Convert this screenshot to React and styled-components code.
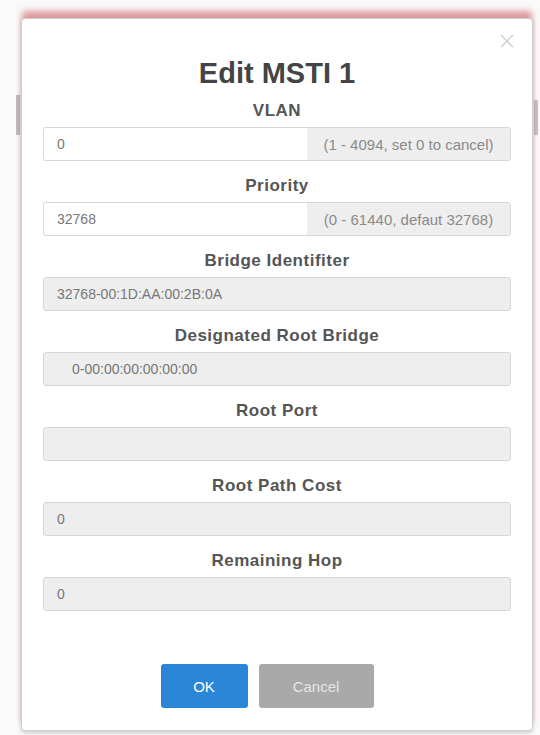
import React from "react";
import styled, { createGlobalStyle } from "styled-components";

const Global = createGlobalStyle`
  html, body {
    margin: 0;
    padding: 0;
    background: #fafafa;
    font-family: "Liberation Sans", Arial, sans-serif;
  }
`;

const Page = styled.div`
  position: relative;
  width: 540px;
  height: 735px;
  overflow: hidden;
  padding-top: 18px;
  box-sizing: border-box;
`;

// bits of the page behind the dialog that peek out at the sides
const Peek = styled.div`
  position: absolute;
  top: ${props => props.top}px;
  left: ${props => props.left}px;
  width: 4px;
  height: ${props => props.h}px;
  background: ${props => props.colour || "#cfcfcf"};
`;

const Modal = styled.div`
  position: relative;
  margin-left: 21px;
  width: 512px;
  height: 713px;
  box-sizing: border-box;
  background: #fff;
  border: 1px solid #cfcfcf;
  border-radius: 4px;
  box-shadow: 0 -8px 6px -1px rgba(210, 112, 120, 0.7),
    0 2px 4px rgba(0, 0, 0, 0.18);
  padding: 37px 21px 0 21px;
  display: flex;
  flex-direction: column;
`;

const Close = styled.button`
  position: absolute;
  top: 14px;
  right: 17px;
  width: 16px;
  height: 16px;
  padding: 0;
  border: none;
  background: none;
  color: #cfcfcf;
  display: flex;
  align-items: center;
  justify-content: center;
`;

const Title = styled.h2`
  margin: 0 0 11px;
  text-align: center;
  font-size: 29px;
  line-height: 34px;
  font-weight: bold;
  color: #444;
`;

const Group = styled.div`
  display: flex;
  flex-direction: column;
  gap: 6px;
  margin-bottom: 15px;
`;

const Label = styled.label`
  text-align: center;
  font-size: 17px;
  line-height: 20px;
  letter-spacing: 0.5px;
  font-weight: bold;
  color: #555;
`;

const InputRow = styled.div`
  display: flex;
  height: 34px;
  border: 1px solid #d6d6d6;
  border-radius: 3px;
  box-sizing: border-box;
  overflow: hidden;
  background: ${props => (props.readOnly ? "#eeeeee" : "#fff")};
`;

const Field = styled.div`
  flex: 1;
  display: flex;
  align-items: center;
  padding-left: ${props => props.indent || 13}px;
  font-size: 14px;
  color: #777;
`;

const Addon = styled.div`
  width: 203px;
  display: flex;
  align-items: center;
  justify-content: center;
  background: #eeeeee;
  font-size: 15px;
  color: #8a8a8a;
  white-space: nowrap;
`;

const Footer = styled.div`
  display: flex;
  justify-content: center;
  gap: 11px;
  margin-top: 38px;
  padding-right: 20px;
`;

const Button = styled.button`
  height: 44px;
  width: ${props => props.w}px;
  border: none;
  border-radius: 3px;
  font-family: "Liberation Sans", Arial, sans-serif;
  font-size: 15px;
  background: ${props => (props.primary ? "#2c86d8" : "#a9a9a9")};
  color: ${props => (props.primary ? "#fff" : "#e6e6e6")};
`;

const fields = [
  { label: "VLAN", value: "0", hint: "(1 - 4094, set 0 to cancel)" },
  { label: "Priority", value: "32768", hint: "(0 - 61440, defaut 32768)" },
  { label: "Bridge Identifiter", value: "32768-00:1D:AA:00:2B:0A", readOnly: true },
  { label: "Designated Root Bridge", value: "0-00:00:00:00:00:00", readOnly: true, indent: 28 },
  { label: "Root Port", value: "", readOnly: true },
  { label: "Root Path Cost", value: "0", readOnly: true },
  { label: "Remaining Hop", value: "0", readOnly: true },
];

function App() {
  return (
    <Page>
      <Global />
      <Peek top={95} left={16} h={40} colour="#bdbdbd" />
      <Peek top={100} left={534} h={35} colour="#c4c4c4" />
      <Modal>
        <Close aria-label="close">
          <svg width="14" height="14" viewBox="0 0 14 14">
            <path d="M1 1L13 13M13 1L1 13" stroke="currentColor" strokeWidth="1.4" />
          </svg>
        </Close>
        <Title>Edit MSTI 1</Title>

        {fields.map(f => (
          <Group key={f.label}>
            <Label>{f.label}</Label>
            <InputRow readOnly={f.readOnly}>
              <Field indent={f.indent}>{f.value}</Field>
              {f.hint ? <Addon>{f.hint}</Addon> : null}
            </InputRow>
          </Group>
        ))}

        <Footer>
          <Button primary w={87}>OK</Button>
          <Button w={115}>Cancel</Button>
        </Footer>
      </Modal>
    </Page>
  );
}

export default App;
